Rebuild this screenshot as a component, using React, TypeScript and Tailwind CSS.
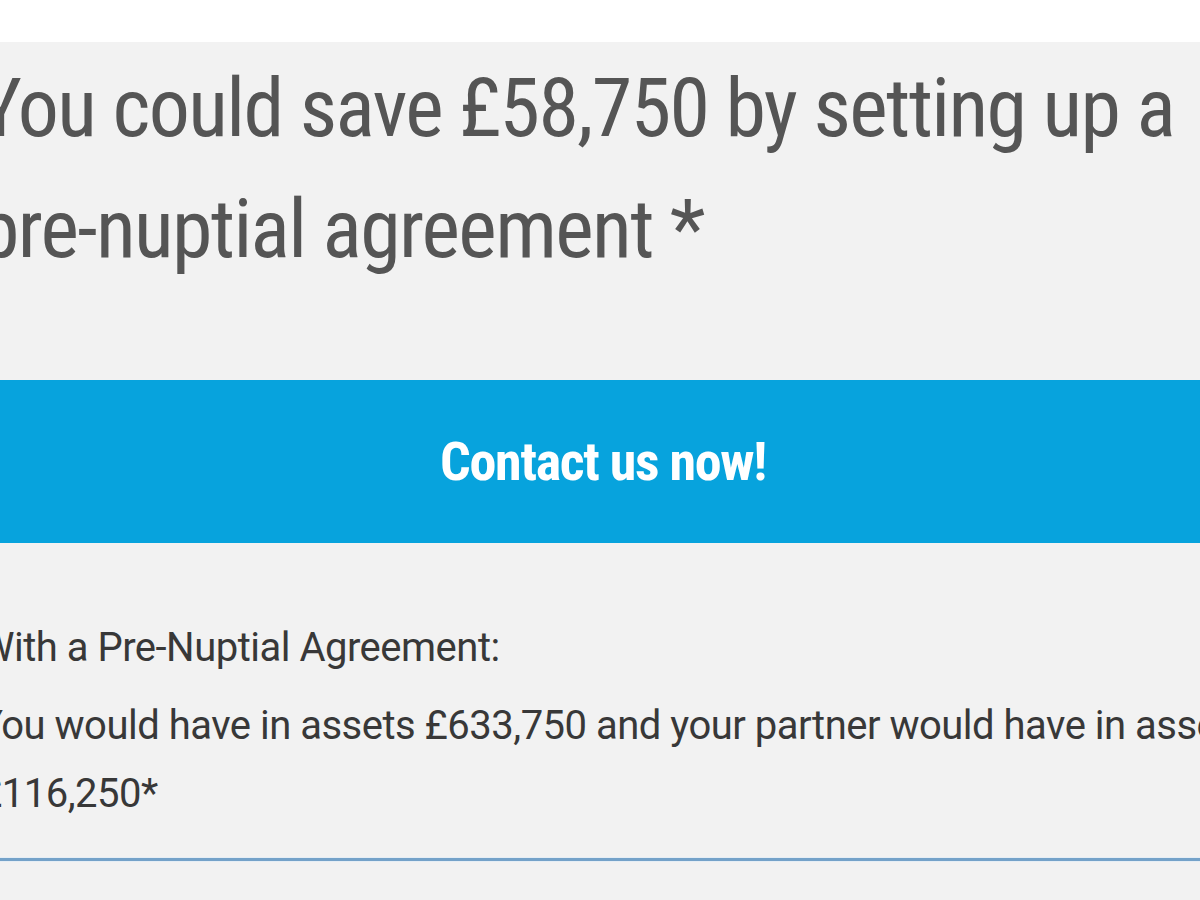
export default function App() {
  return (
    <div className="w-[1200px] h-[900px] overflow-hidden bg-white">
      <div className="mt-[42px] h-[858px] bg-[#f2f2f2]">
        <div className="w-[1248px] ml-[-21px]">
          <h1 className="pt-[6px] font-['Roboto_Condensed','Roboto',sans-serif] text-[82px] leading-[121px] tracking-[-0.02em] font-normal text-[#555555]">
            You could save £58,750 by setting up a pre-nuptial agreement *
          </h1>

          <button
            type="button"
            className="mt-[90px] w-full h-[163px] bg-[#07a3dd] font-['Roboto_Condensed','Roboto',sans-serif] text-white text-[54px] tracking-[-0.024em] font-bold"
          >
            Contact us now!
          </button>

          <div className="w-[1290px] pt-[71px] font-['Roboto',sans-serif] text-[40px] leading-[68px] tracking-[-0.0125em] text-[#383838]">
            <p>With a Pre-Nuptial Agreement:</p>
            <p className="mt-[10px]">
              You would have in assets £633,750 and your partner would have in assets £116,250*
            </p>
          </div>

          <div className="mt-[29px] border-y border-[#e6eef5] bg-[#74a2c9] h-[5px]" />
        </div>
      </div>
    </div>
  );
}
